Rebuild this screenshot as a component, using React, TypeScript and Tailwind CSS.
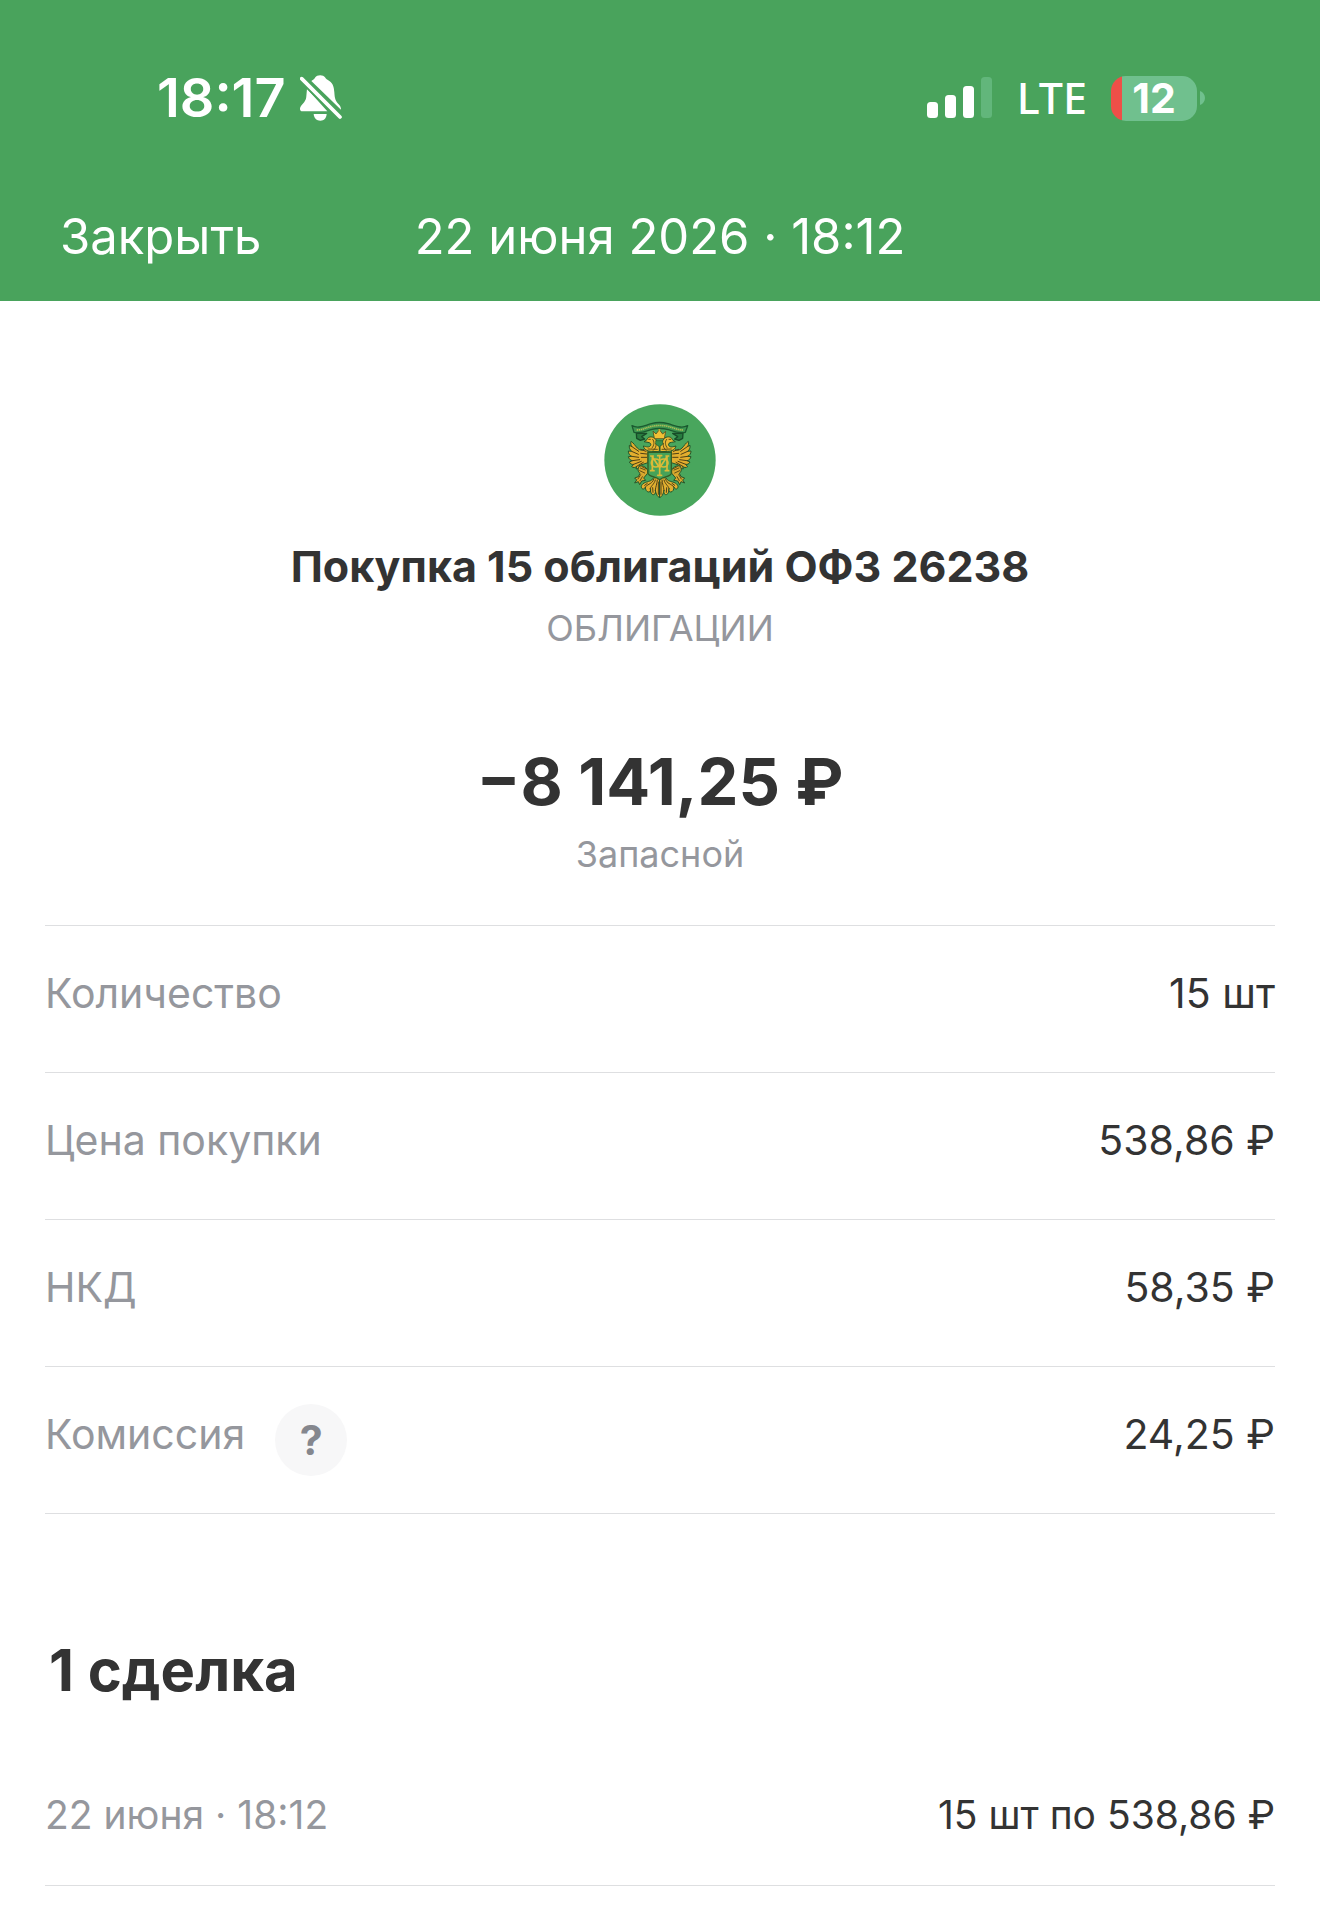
import { clsx } from "clsx";

const DETAILS = [
    { label: "Количество", value: "15 шт" },
    { label: "Цена покупки", value: "538,86 ₽" },
    { label: "НКД", value: "58,35 ₽" },
    { label: "Комиссия", value: "24,25 ₽", hint: true },
];

function BellOffIcon() {
    return (
        <svg viewBox="0 0 126 138" className="h-[46px] w-[42px]" fill="#fff" aria-hidden="true">
            <path d="M34 18C40 14 44 12 46 7C50 -1 70 -2 75 7C77 12 82 14 88 18C100 26 102 39 103 52C104 70 106 78 116 88C121 93 123 98 123 104Z" />
            <path d="M21 41L82 109H7C-1 109 -2 99 3 93C14 81 18 76 19 64Z" />
            <path d="M41 117H80C79 130 72 137 61 137C50 137 42 130 41 117Z" />
            <path d="M5 11L121 127" stroke="#49a35c" strokeWidth="22" />
            <path d="M5 11L120 126" stroke="#fff" strokeWidth="11" strokeLinecap="round" />
        </svg>
    );
}

function SignalIcon() {
    return (
        <svg viewBox="0 0 66 42" className="h-[42px] w-[66px]" fill="#fff" aria-hidden="true">
            <rect x="0" y="25" width="11" height="16" rx="3.5" />
            <rect x="18" y="18" width="11" height="23" rx="3.5" />
            <rect x="36" y="9" width="11" height="32" rx="3.5" />
            <rect x="54" y="0" width="11" height="41" rx="3.5" fill="#62b67b" />
        </svg>
    );
}

function Battery() {
    return (
        <div className="flex items-center gap-[3px]">
            <div className="flex h-[45px] w-[86px] justify-center rounded-[15px] bg-linear-to-r from-[#ee4f48] from-[11px] to-[#70c08e] to-[11px]">
                <span className="text-[41px] leading-[45px] font-bold">12</span>
            </div>
            <svg viewBox="0 0 5 14" className="h-[14px] w-[5px]" fill="#70c08e" aria-hidden="true">
                <path d="M0 0C3 1 5 4 5 7S3 13 0 14Z" />
            </svg>
        </div>
    );
}

// one half of the eagle, mirrored for the other side
function EagleHalf() {
    return (
        <g>
            {/* wing */}
            <path
                d="M168 172C160 184 150 182 142 174C134 166 132 160 123 154C121 160 123 166 126 170L118 166C117 174 120 180 125 184L115 183C115 191 119 196 125 199L115 200C117 207 121 211 127 212L118 216C121 222 126 224 131 223L125 230C130 234 136 233 140 229L138 237C146 236 150 231 152 225L174 218V186Z"
                fill="#e2ae2e"
            />
            <path
                d="M126 170L146 184M125 184L145 193M125 199L146 202M127 212L149 209M131 223L154 214M140 229L160 217M152 178L168 184M152 190L170 192M154 202L170 202"
                stroke="#4f4015"
                strokeWidth="3"
            />
            {/* head and neck */}
            <path
                d="M208 184V170C202 162 202 148 190 142C180 138 172 143 171 149L162 155L174 157C180 158 184 161 182 166C178 174 168 170 160 168C162 178 172 184 184 184Z"
                fill="#e9b832"
            />
            <path d="M176 148H181M188 148C194 154 193 166 186 174M198 160C200 168 196 176 190 181M174 177L202 178" stroke="#4f4015" strokeWidth="2.6" />
            {/* leg and claw */}
            <path
                d="M148 228C142 236 143 245 150 250L145 260L134 264L140 270L134 279L145 275L149 284L155 273L167 271L161 264L172 251C177 240 166 224 148 228Z"
                fill="#d8a82e"
            />
            <path d="M151 234L166 240M149 242L164 249M156 230L168 236M152 254L144 267M157 260L150 272" stroke="#4f4015" strokeWidth="2.6" />
            {/* tail */}
            <path
                d="M208 262L190 264C184 274 178 273 170 276C158 279 151 288 155 294C158 300 165 296 166 291C166 299 170 306 176 306C182 306 183 300 181 295C181 307 184 314 191 314C197 313 197 306 196 300C198 312 202 321 208 322Z"
                fill="#e2b030"
            />
            <path d="M191 268C187 282 176 280 166 291M196 270C192 284 184 286 181 295M202 270C201 282 197 290 196 300M205 276V313M172 280L164 286M188 293L189 307" stroke="#4f4015" strokeWidth="3" />
        </g>
    );
}

function Emblem() {
    return (
        <svg viewBox="42 42 336 336" className="size-28" fill="none" role="img" aria-label="ОФЗ">
            <circle cx="210" cy="210" r="167" fill="#49a65d" />
            <g strokeLinecap="round" strokeLinejoin="round">
                <g stroke="#23552c" strokeWidth="3">
                    <EagleHalf />
                    <g transform="translate(418 0) scale(-1 1)">
                        <EagleHalf />
                    </g>
                </g>
                <path d="M190 124L198 132L208 119L218 132L227 124L223 146H194Z" fill="#f1c136" stroke="#5c501c" strokeWidth="2.5" />
                <circle cx="208" cy="119" r="3" fill="#f1c136" />
                <path d="M198 152H218V163L208 170L198 163Z" fill="#37924b" stroke="#265d2e" strokeWidth="2" />
                {/* ribbon */}
                <path d="M139 129L140 145L151 151L164 147L155 140L170 130ZM279 129L278 145L267 151L254 147L263 140L248 130Z" fill="#287b3f" stroke="#174c28" strokeWidth="4" />
                <path d="M126 107C145 117 162 107 184 101Q208 94 234 101C256 107 273 117 293 107L286 127C266 132 250 124 235 119Q209 112 183 119C168 124 151 132 132 127Z" fill="#3d9650" stroke="#1b5a30" strokeWidth="4" />
                <path d="M140 120C157 120 168 113 185 109Q209 104 233 109C251 113 262 120 279 120" stroke="#b2bf57" strokeWidth="5" strokeLinecap="butt" strokeDasharray="4 2" />
                {/* shield */}
                <path d="M174 187H244V250C242 260 220 260 209 269C198 260 176 260 174 250Z" fill="#46a258" stroke="#345d25" strokeWidth="4" />
                <g stroke="#dcbb38" strokeWidth="5">
                    <path d="M187 199V242M231 199V242M187 200L209 233L231 200M209 197V256M182 198H190M228 198H236M182 242H192M226 242H236M203 197H215M203 256H215" />
                    <ellipse cx="197" cy="219" rx="13" ry="12" />
                    <ellipse cx="221" cy="219" rx="13" ry="12" />
                </g>
            </g>
        </svg>
    );
}

function StatusBar() {
    return (
        <div className="flex items-center justify-between pt-[66px] pr-[115px] pl-[157px]">
            <div className="flex items-center gap-[14px]">
                <span className="text-[54px] leading-[64px] font-semibold">18:17</span>
                <BellOffIcon />
            </div>
            <div className="flex items-center gap-6">
                <SignalIcon />
                <span className="font-['Noto_Sans',sans-serif] text-[43px] leading-[64px] font-medium">LTE</span>
                <Battery />
            </div>
        </div>
    );
}

export default function App() {
    return (
        <div className="min-h-screen bg-white font-['Inter',sans-serif] text-[#333]">
            <header className="bg-[#49a35c] text-white">
                <StatusBar />
                <div className="grid grid-cols-[1fr_auto_1fr] items-center px-[60px] pt-[75px] pb-8 text-[49px] leading-[64px]">
                    <button type="button" className="justify-self-start">
                        Закрыть
                    </button>
                    <h1>22 июня 2026 · 18:12</h1>
                </div>
            </header>

            <main className="px-[45px]">
                <section className="flex flex-col items-center pt-[103px] pb-[47px] text-center">
                    <Emblem />
                    <h2 className="mt-5 text-[43px] leading-[60px] font-bold">Покупка 15 облигаций ОФЗ 26238</h2>
                    <p className="mt-2 text-[36px] leading-[48px] text-[#95979d]">ОБЛИГАЦИИ</p>
                    <p className="mt-[90px] text-[65px] leading-[80px] font-bold">−8 141,25 ₽</p>
                    <p className="mt-2 text-[36px] leading-[48px] text-[#95979d]">Запасной</p>
                </section>

                <dl className="border-y border-[#dedfe1] text-[41px] leading-[60px]">
                    {DETAILS.map(({ label, value, hint }, i) => (
                        <div
                            key={label}
                            className={clsx(
                                "flex justify-between pt-[37px] pb-[49px]",
                                i > 0 && "border-t border-[#dedfe1]"
                            )}
                        >
                            <dt className="flex items-start gap-[30px] text-[#95979d]">
                                {label}
                                {hint && (
                                    <button
                                        type="button"
                                        aria-label="Подробнее о комиссии"
                                        className="-mb-3 size-[72px] rounded-full bg-[#f7f7f8] text-[41px] leading-[72px] font-bold text-[#85878e]"
                                    >
                                        ?
                                    </button>
                                )}
                            </dt>
                            <dd>{value}</dd>
                        </div>
                    ))}
                </dl>

                <section className="pt-[116px]">
                    <h2 className="pl-1 text-[58px] leading-[80px] font-bold">1 сделка</h2>
                    <div className="flex justify-between border-b border-[#dedfe1] pt-[78px] pb-[43px] text-[39px] leading-[54px]">
                        <span className="text-[#95979d]">22 июня · 18:12</span>
                        <span>15 шт по 538,86 ₽</span>
                    </div>
                </section>
            </main>
        </div>
    );
}
